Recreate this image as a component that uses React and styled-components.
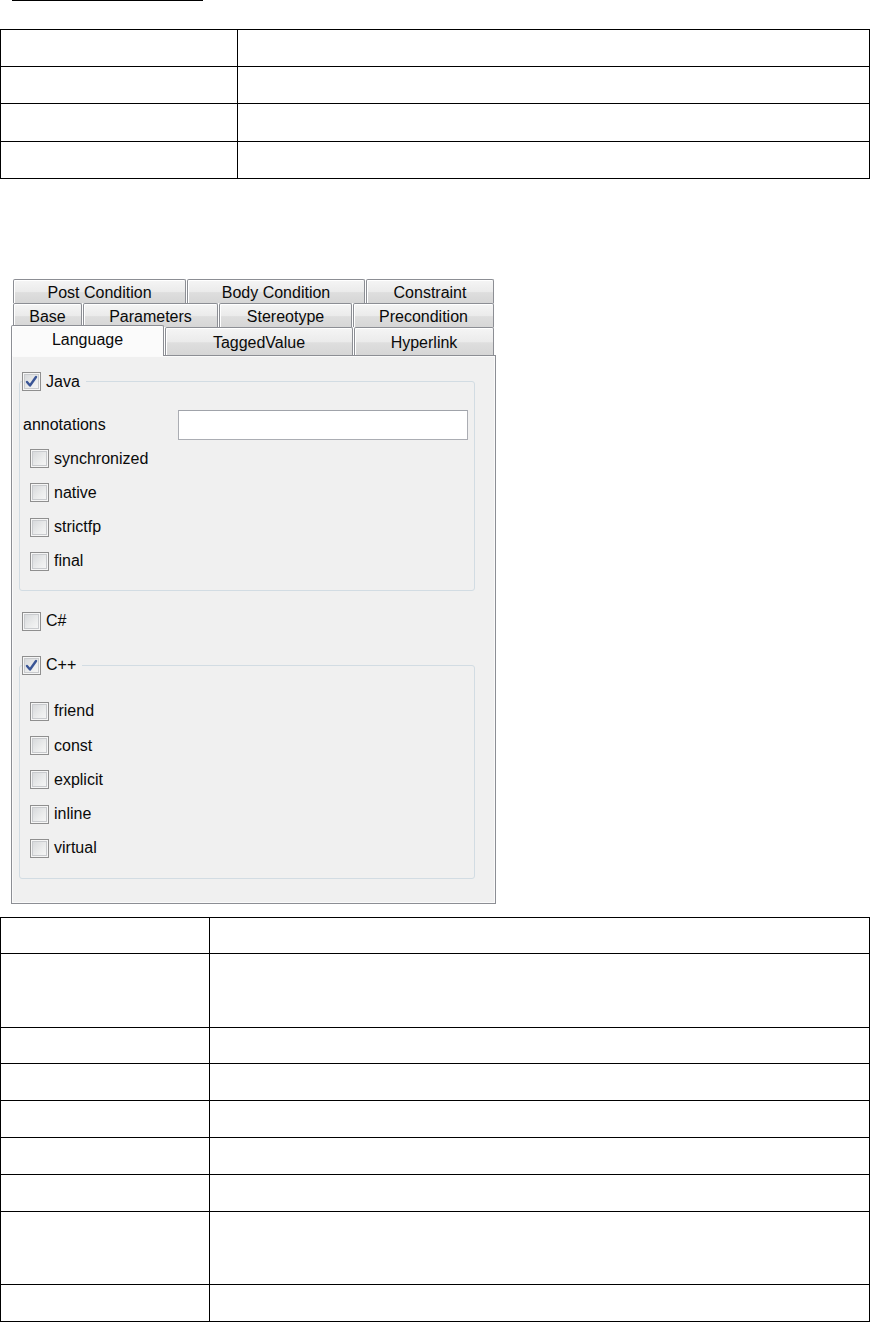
import React from "react"
import styled, { createGlobalStyle } from "styled-components"

const GlobalStyle = createGlobalStyle`
  html, body {
    margin: 0;
    padding: 0;
    background: #fff;
  }
  body {
    font-family: "Liberation Sans", Arial, sans-serif;
  }
`

const Page = styled.div`
  width: 871px;
  display: flex;
  flex-direction: column;
`

const TopRule = styled.div`
  margin-left: 12px;
  width: 191px;
  height: 1px;
  background: #000;
`

const Grid = styled.div`
  box-sizing: border-box;
  width: 870px;
  margin-top: ${p => p.$top}px;
  display: grid;
  grid-template-columns: ${p => p.$cols};
  grid-template-rows: ${p => p.$rows};
  border-top: 1px solid #000;
  border-left: 1px solid #000;
`

const Cell = styled.div`
  border-right: 1px solid #000;
  border-bottom: 1px solid #000;
`

const Panel = styled.div`
  margin-top: ${p => p.$top}px;
  margin-left: 11px;
  width: 485px;
  height: 625px;
  display: flex;
  flex-direction: column;
  font-size: 16px;
  color: #0a0a0a;
`

const TabStrip = styled.div`
  display: flex;
  flex-direction: column;
`

const TabRow = styled.div`
  height: ${p => p.$h}px;
  padding-left: ${p => p.$pad}px;
  display: flex;
  align-items: flex-end;
  gap: 1px;
`

const Tab = styled.div`
  box-sizing: border-box;
  position: relative;
  z-index: ${p => (p.$selected ? 1 : 0)};
  width: ${p => p.$w}px;
  height: ${p => (p.$selected ? p.$h + 3 : p.$h)}px;
  margin-bottom: ${p => (p.$selected ? -1 : 0)}px;
  display: flex;
  align-items: center;
  justify-content: center;
  padding-top: ${p => (p.$selected ? 0 : 2)}px;
  padding-bottom: ${p => (p.$selected ? 2 : 0)}px;
  border: 1px solid #8c8e94;
  border-bottom: none;
  border-radius: 2px 2px 0 0;
  background: ${p =>
    p.$selected
      ? "#fbfbfb"
      : "linear-gradient(#f5f5f5, #ebebeb 50%, #dedede 55%, #d6d6d6)"};
  box-shadow: inset 1px 1px 0 #fff;
  white-space: nowrap;
`

const Content = styled.div`
  box-sizing: border-box;
  flex: 1;
  border: 1px solid #8c8e94;
  background: #f0f0f0;
  box-shadow: inset 0 0 0 1px #fafafa;
  padding: 16px 20px 0 7px;
  display: flex;
  flex-direction: column;
`

const Group = styled.fieldset`
  margin: ${p => p.$top}px 0 0 0;
  padding: 0 6px ${p => p.$bottom}px 3px;
  border: 1px solid #d2dce3;
  border-radius: 3px;
  min-inline-size: 0;
`

const Legend = styled.legend`
  margin-left: -1px;
  padding: 0 6px 0 0;
  display: flex;
  align-items: center;
  gap: 5px;
`

const Options = styled.div`
  margin-top: ${p => p.$top}px;
  margin-left: 7px;
  display: flex;
  flex-direction: column;
  gap: ${p => p.$gap}px;
`

const FieldRow = styled.div`
  margin-top: 19px;
  display: flex;
  align-items: center;
  justify-content: space-between;
`

const TextField = styled.div`
  box-sizing: border-box;
  width: 290px;
  height: 30px;
  background: #fff;
  border: 1px solid #abadb3;
  border-top-color: #a0a3aa;
`

const CheckRow = styled.label`
  margin: ${p => p.$margin || "0"};
  display: flex;
  align-items: center;
  gap: 5px;
  height: 19px;
  white-space: nowrap;
`

const Box = styled.span`
  box-sizing: border-box;
  flex: none;
  width: 19px;
  height: 19px;
  display: flex;
  align-items: center;
  justify-content: center;
  border: 1px solid #8f8f8f;
  background: linear-gradient(135deg, #d3d5d8 0%, #eceded 60%, #f8f8f8 100%);
  box-shadow: inset 0 0 0 1px #f6f6f6, inset 0 0 0 2px #c9cbce;
`

const Check = ({ checked, label, margin }) => (
  <CheckRow $margin={margin}>
    <Box>
      {checked && (
        <svg width="13" height="13" viewBox="0 0 13 13">
          <path
            d="M2 7 L5 10.5 L11 2"
            fill="none"
            stroke="#3a5596"
            strokeWidth="2.4"
            strokeLinecap="round"
            strokeLinejoin="round"
          />
        </svg>
      )}
    </Box>
    <span>{label}</span>
  </CheckRow>
)

const tabRows = [
  {
    h: 24,
    pad: 2,
    tabs: [
      ["Post Condition", 173],
      ["Body Condition", 178],
      ["Constraint", 128],
    ],
  },
  {
    h: 24,
    pad: 2,
    tabs: [
      ["Base", 69],
      ["Parameters", 135],
      ["Stereotype", 133],
      ["Precondition", 141],
    ],
  },
  {
    h: 28,
    pad: 0,
    tabs: [
      ["Language", 153, true],
      ["TaggedValue", 188],
      ["Hyperlink", 140],
    ],
  },
]

const javaOptions = ["synchronized", "native", "strictfp", "final"]
const cppOptions = ["friend", "const", "explicit", "inline", "virtual"]

const topRows = [37, 37, 38, 37]
const bottomRows = [36, 74, 36, 37, 37, 37, 37, 73, 37]

const Table = ({ top, cols, rows }) => (
  <Grid
    $top={top}
    $cols={cols.map(c => `${c}px`).join(" ")}
    $rows={rows.map(r => `${r}px`).join(" ")}
  >
    {rows.flatMap((r, i) => cols.map((c, j) => <Cell key={`${i}-${j}`} />))}
  </Grid>
)

const App = () => {
  return (
    <Page>
      <GlobalStyle />
      <TopRule />
      <Table top={28} cols={[237, 632]} rows={topRows} />
      <Panel $top={100}>
        <TabStrip>
          {tabRows.map((row, i) => (
            <TabRow key={i} $h={row.h} $pad={row.pad}>
              {row.tabs.map(([name, w, selected]) => (
                <Tab key={name} $w={w} $h={row.h} $selected={selected}>
                  {name}
                </Tab>
              ))}
            </TabRow>
          ))}
        </TabStrip>
        <Content>
          <Group $top={0} $bottom={19}>
            <Legend>
              <Check checked label="Java" />
            </Legend>
            <FieldRow>
              <span>annotations</span>
              <TextField />
            </FieldRow>
            <Options $top={9} $gap={15.3}>
              {javaOptions.map(o => (
                <Check key={o} label={o} />
              ))}
            </Options>
          </Group>
          <Check label="C#" margin="21px 0 0 3px" />
          <Group $top={25} $bottom={20}>
            <Legend>
              <Check checked label="C++" />
            </Legend>
            <Options $top={27} $gap={15.25}>
              {cppOptions.map(o => (
                <Check key={o} label={o} />
              ))}
            </Options>
          </Group>
        </Content>
      </Panel>
      <Table top={13} cols={[209, 660]} rows={bottomRows} />
    </Page>
  )
}

export default App
